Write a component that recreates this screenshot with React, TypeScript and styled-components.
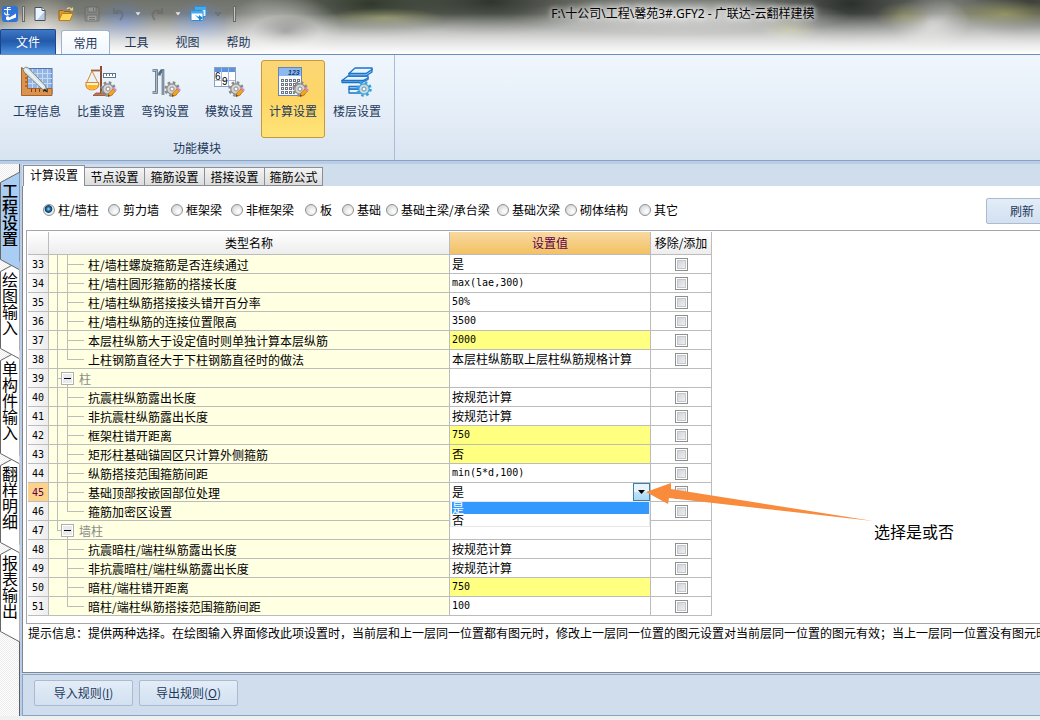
import React from "react";
import styled, { createGlobalStyle, css } from "styled-components";

const cjk = '"Noto Sans CJK SC", sans-serif';

const GlobalStyle = createGlobalStyle`
  *, *::before, *::after { box-sizing: border-box; }
  html, body { margin: 0; overflow-x: hidden; }
  body, button, input, select {
    font-family: ${cjk};
    font-size: 12px;
    line-height: 16px;
    color: #000;
  }
  button { padding: 0; border: 0; background: none; }
  svg { display: block; }
`;

const Window = styled.div`
  min-height: 100vh;
  display: flex;
  flex-direction: column;
  background: #f0f0f0;
`;

/* ---------- title bar ---------- */

const Header = styled.header`
  height: 55px;
  overflow: hidden;
  display: flex;
  flex-direction: column;
  justify-content: space-between;
  border-bottom: 1px solid #6b8fbb;
  background:
    linear-gradient(to bottom, rgba(255, 255, 255, 0) 25%, rgba(255, 255, 255, 0.65) 70%, #fff 100%),
    radial-gradient(ellipse 30px 24px at 124px 24px, rgba(96, 125, 185, 0.8), transparent),
    radial-gradient(ellipse 32px 26px at 200px 26px, rgba(96, 130, 195, 0.85), transparent),
    radial-gradient(ellipse 34px 16px at 286px 32px, rgba(70, 70, 70, 0.9), transparent),
    radial-gradient(ellipse 60px 34px at 282px 28px, rgba(215, 215, 212, 0.8), transparent),
    radial-gradient(ellipse 40px 34px at 42px 28px, rgba(226, 216, 200, 0.8), transparent),
    radial-gradient(ellipse 60px 10px at 385px 18px, rgba(170, 172, 110, 0.6), transparent),
    radial-gradient(ellipse 110px 34px at 370px 4px, rgba(42, 50, 36, 0.9), transparent),
    radial-gradient(ellipse 110px 34px at 490px 2px, rgba(40, 46, 38, 0.9), transparent),
    radial-gradient(ellipse 170px 18px at 680px 16px, rgba(226, 226, 226, 0.9), transparent),
    radial-gradient(ellipse 30px 12px at 790px 30px, rgba(180, 180, 120, 0.6), transparent),
    radial-gradient(ellipse 30px 14px at 905px 16px, rgba(160, 160, 104, 0.6), transparent),
    radial-gradient(ellipse 100px 44px at 850px 4px, rgba(36, 40, 38, 0.9), transparent),
    radial-gradient(ellipse 40px 26px at 930px 22px, rgba(224, 224, 224, 0.8), transparent),
    radial-gradient(ellipse 60px 14px at 1005px 14px, rgba(160, 160, 104, 0.8), transparent),
    radial-gradient(ellipse 70px 40px at 1030px 4px, rgba(44, 48, 40, 0.8), transparent),
    linear-gradient(to bottom, #70736c, #9a9b98);
`;

const TitleRow = styled.div`
  height: 27px;
  display: flex;
  align-items: center;
  padding-left: 2px;
`;

const QuickButton = styled.button<{ $narrow?: boolean; $faded?: boolean }>`
  width: ${(p) => (p.$narrow ? 14 : 26)}px;
  height: 20px;
  display: flex;
  align-items: center;
  justify-content: center;
  opacity: ${(p) => (p.$faded ? 0.5 : 1)};
`;

const Grip = styled.span`
  width: 3px;
  height: 16px;
  margin: 0 2px 0 4px;
  border: 1px solid #6a6a6a;
  background: #c8c8c8;
`;

const GripEnd = styled(Grip)`
  margin-left: 8px;
`;

const WindowTitle = styled.h1`
  flex: 1;
  margin: 0 -88px 0 0;
  text-align: center;
  white-space: nowrap;
  font: 400 12px/16px "Noto Sans", ${cjk};
  text-shadow: 0 0 5px #fff, 0 0 8px #fff;
`;

const MenuRow = styled.nav`
  display: flex;
  align-items: flex-end;
`;

const FileTab = styled.button`
  width: 56px;
  height: 25px;
  margin-right: 5px;
  color: #fff;
  border: 1px solid #1c4788;
  border-bottom: 0;
  border-radius: 2px 2px 0 0;
  background: linear-gradient(to bottom, #3f78c6, #2459a8 45%, #2b66b8 60%, #4f93e0);
`;

const MenuTab = styled.button<{ $active?: boolean }>`
  width: ${(p) => (p.$active ? 49 : 51)}px;
  height: 24px;
  color: #1e395b;
  border-radius: 3px 3px 0 0;
  ${(p) =>
    p.$active &&
    css`
      margin-right: 1px;
      border: 1px solid #9db4d0;
      border-bottom: 0;
      background: linear-gradient(to bottom, #fff, #f0f6fd);
    `}
`;

/* ---------- ribbon ---------- */

const Ribbon = styled.section`
  height: 106px;
  display: flex;
  border-bottom: 1px solid #8ba3c2;
  background: linear-gradient(to bottom, #eff6fd, #e4edf7 60%, #d8e4f1);
`;

const RibbonGroup = styled.div`
  display: flex;
  flex-direction: column;
  padding: 5px 5px 0;
  border-right: 1px solid #a9bdd6;
`;

const RibbonItems = styled.div`
  display: flex;
`;

const RibbonButton = styled.button<{ $active?: boolean }>`
  width: 64px;
  height: 78px;
  display: flex;
  flex-direction: column;
  align-items: center;
  gap: 5px;
  padding-top: 5px;
  color: #1e395b;
  border: 1px solid transparent;
  border-radius: 3px;
  ${(p) =>
    p.$active &&
    css`
      border-color: #c79a35;
      background: linear-gradient(to bottom, #fbd676, #fdd666 50%, #ffe478);
    `}
`;

const GroupLabel = styled.div`
  margin-top: 2px;
  text-align: center;
  color: #1e395b;
`;

/* ---------- body ---------- */

const Body = styled.div`
  flex: 1;
  display: flex;
  padding-top: 3px;
  margin-bottom: 4px;
  background: #b9cde6;
`;

const Rail = styled.div`
  width: 20px;
  flex: none;
  display: flex;
  flex-direction: column;
  padding-top: 8px;
  border-right: 1px solid #606060;
  background: repeating-conic-gradient(#fff 0 25%, #ececec 0 50%) 0 0 / 2px 2px;
`;

const RailButton = styled.button<{ $level: number; $active?: boolean }>`
  position: relative;
  z-index: ${(p) => p.$level};
  padding: 11px 1px 14px 2px;
  font-weight: ${(p) => (p.$active ? 500 : 400)};

  svg {
    position: absolute;
    z-index: -1;
    left: 0;
    top: 0;
    overflow: visible;
  }
`;

const RailText = styled.span`
  display: block;
  writing-mode: vertical-rl;
  font-size: 16px;
  line-height: 16px;
`;

const Main = styled.main`
  flex: 1;
  min-width: 0;
  display: flex;
  flex-direction: column;
  margin-left: 2px;
  background: #d0dded;
`;

const Tabs = styled.div`
  display: flex;
  align-items: flex-end;
  height: 22px;
  padding-left: 1px;
`;

const Tab = styled.button<{ $active?: boolean }>`
  width: ${(p) => (p.$active ? 62 : 60)}px;
  height: ${(p) => (p.$active ? 21 : 19)}px;
  padding-bottom: ${(p) => (p.$active ? 2 : 0)}px;
  border: 1px solid #8a8f96;
  border-bottom-width: ${(p) => (p.$active ? 0 : 1)}px;
  border-left-width: ${(p) => (p.$active ? 1 : 0)}px;
  background: ${(p) => (p.$active ? "#fff" : "linear-gradient(to bottom, #f4f4f4, #dcdcdc)")};
  &:last-child { width: 58px; }
`;

const Sheet = styled.div`
  flex: 1;
  display: flex;
  flex-direction: column;
  border-left: 1px solid #80858c;
  border-bottom: 1px solid #80858c;
  background: #fff;
`;

const FilterBar = styled.form`
  display: flex;
  align-items: center;
  height: 44px;
  padding: 6px 0 0 20px;
  margin-right: -18px;
`;

const Choices = styled.div`
  flex: 1;
  display: grid;
  grid-template-columns: 65px 63px 60px 74px 37px 44px 111px 68px 74px auto;
  padding-bottom: 2px;
`;

const Choice = styled.label`
  display: flex;
  align-items: center;
  gap: 3px;
  white-space: nowrap;
`;

const Radio = styled.input`
  appearance: none;
  width: 12px;
  height: 12px;
  flex: none;
  margin: 0;
  border: 1px solid #8e8f8f;
  border-radius: 50%;
  background: radial-gradient(circle at 65% 65%, #fff, #c8ccd0);
  &:checked {
    background: radial-gradient(circle at 45% 40%, #9be0ff 0, #1d6fa5 25%, #123a5e 42%, #e8edf2 52%);
  }
`;

const PlainButton = styled.button<{ $width: number }>`
  width: ${(p) => p.$width}px;
  height: 26px;
  color: #1e395b;
  border: 1px solid #abbad0;
  border-radius: 2px;
  background: linear-gradient(to bottom, #e3edf8, #d2e0f0);
`;

const GridFrame = styled.div`
  position: relative;
  padding: 1px 1px 7px;
  margin-left: 3px;
  border: 1px solid #a6a6aa;
  border-right: 0;
`;

const Grid = styled.table`
  width: 684px;
  table-layout: fixed;
  border-collapse: separate;
  border-spacing: 0;
`;

const HeadCell = styled.th<{ $hot?: boolean }>`
  height: 23px;
  padding: 0;
  font-weight: 400;
  white-space: nowrap;
  color: ${(p) => (p.$hot ? "#5a0050" : "#000")};
  border-right: 1px solid #bcbcbc;
  border-bottom: 1px solid #bcbcbc;
  background: ${(p) =>
    p.$hot ? "linear-gradient(to bottom, #f8d9a0, #f2c163)" : "linear-gradient(to bottom, #fff, #ededed)"};
`;

const Cell = styled.td<{ $fill?: string }>`
  height: 19px;
  padding: 0;
  white-space: nowrap;
  border-right: 1px solid #bcbcbc;
  border-bottom: 1px solid #bcbcbc;
  background: ${(p) => p.$fill ?? "#fff"};
`;

const NumberCell = styled.th<{ $hot?: boolean }>`
  padding: 1px 0 0;
  font: 400 10px/16px "DejaVu Sans Mono", monospace;
  color: ${(p) => (p.$hot ? "#5a0050" : "#000")};
  border-right: 1px solid #bcbcbc;
  border-bottom: 1px solid #bcbcbc;
  background: ${(p) => (p.$hot ? "#fdd38c" : "linear-gradient(to right, #fbfbfb, #ededed)")};
`;

const NameLine = styled.div<{ $group?: boolean }>`
  display: flex;
  align-items: center;
  gap: ${(p) => (p.$group ? 5 : 0)}px;
  height: 18px;
  color: ${(p) => (p.$group ? "#8a8a8a" : "#000")};
`;

const NameText = styled.span`
  padding-top: 2px;
`;

const Value = styled.span<{ $latin?: boolean }>`
  display: block;
  padding-left: 2px;
  line-height: 16px;
  ${(p) => p.$latin && css`font: 400 10px/16px "DejaVu Sans Mono", monospace;`}
`;

const CheckCell = styled(Cell)`
  text-align: center;
  line-height: 0;
`;

const Check = styled.input`
  appearance: none;
  width: 13px;
  height: 13px;
  margin: 0;
  vertical-align: middle;
  border: 1px solid #8e8f8f;
  background: linear-gradient(135deg, #c9ced4, #f6f6f6);
  box-shadow: inset 0 0 0 1px #fff, inset 0 0 0 2px #c4c8cc;
`;

const Combo = styled.div`
  position: relative;
  height: 18px;
`;

const ComboSelect = styled.select`
  appearance: none;
  width: 100%;
  height: 18px;
  padding: 0 0 0 2px;
  border: 0;
  background: #fff;
  outline: 0;
`;

const ComboArrow = styled.span`
  position: absolute;
  right: 0;
  top: 0;
  width: 17px;
  height: 18px;
  display: flex;
  align-items: center;
  justify-content: center;
  border: 1px solid #3c7fb1;
  background: linear-gradient(to bottom, #e8f5fc 50%, #bfe3f7 50%, #a9d8f2);
  pointer-events: none;
`;

const Options = styled.ul`
  position: absolute;
  z-index: 1;
  left: 0;
  right: 0;
  top: 18px;
  margin: 0;
  padding: 0 0 0 1px;
  list-style: none;
  border: 1px solid #e3e9f0;
  background: #fff;
`;

const Option = styled.li<{ $selected?: boolean }>`
  height: 12px;
  overflow: hidden;
  line-height: 12px;
  color: ${(p) => (p.$selected ? "#fff" : "#000")};
  background: ${(p) => (p.$selected ? "#3399ff" : "#fff")};
`;

const Callout = styled.div`
  position: absolute;
  z-index: 2;
  left: 619px;
  top: 252px;
  display: flex;
  align-items: flex-start;
  font-size: 16px;
  line-height: 20px;
  white-space: nowrap;
  pointer-events: none;
`;

const CalloutText = styled.span`
  padding-top: 38px;
`;

const Hint = styled.p`
  flex: 1;
  margin: 0;
  padding: 1px 0 0 5px;
  white-space: nowrap;
  overflow: hidden;
`;

const Footer = styled.footer`
  height: 42px;
  display: flex;
  gap: 6px;
  margin-top: 1px;
  padding: 5px 11px;
  border: 1px solid #86a3c9;
  border-right: 0;
  background: #d0dded;
`;

/* ---------- icons ---------- */

const LogoIcon = () => (
  <svg width="16" height="16" viewBox="0 0 16 16">
    <rect width="16" height="16" rx="3" fill="#2f73d8" />
    <path d="M5.500 1v8M2 3.500h7M2.500 6.500c0 2 2 3 5 2M5.500 1.500h3" stroke="#fff" fill="none" strokeWidth="1.200" />
    <path d="M4 11l2-1 1.500 1.500L14 7.500v4L6 14.500l-2-1z" fill="#fff" />
  </svg>
);
const NewIcon = () => (
  <svg width="16" height="16" viewBox="0 0 16 16">
    <path d="M3 1.500h7l3 3v10H3z" fill="#eef4fb" stroke="#3c536e" />
    <path d="M12 6v8H5z" fill="#b9cbe2" />
    <path d="M10 1.500v3h3" fill="#fff" stroke="#3c536e" />
  </svg>
);
const OpenIcon = () => (
  <svg width="16" height="16" viewBox="0 0 16 16">
    <path d="M1 13.500V4.500h4l1 1h6v3" fill="#d99a2b" stroke="#9a6516" />
    <path d="M1 14.500l3-7h11l-3 7z" fill="#ffd75e" stroke="#b97d1c" />
    <path d="M9 3c2-2 4-1 5 1M14.500 1.500V4H12" fill="none" stroke="#f3d37a" strokeWidth="1.200" />
  </svg>
);
const SaveIcon = () => (
  <svg width="16" height="16" viewBox="0 0 16 16">
    <path d="M1 1h13l1 1v13H1z" fill="#8b8b8b" stroke="#5a5a5a" />
    <path d="M4 1h8v5H4zM3 9h10v6H3z" fill="#b2b2b2" stroke="#666" />
    <path d="M9.500 2v3M5 11.500h6M5 13.500h6" stroke="#5f5f5f" />
  </svg>
);
const UndoIcon = ({ flip }: { flip?: boolean }) => (
  <svg width="16" height="16" viewBox="0 0 16 16">
    <path
      d={flip ? "M5 14C0 9 4 1 11 6M12 2v5H7" : "M10 14c5-5 1-12-5-8M4 2v5h5"}
      fill="none"
      stroke="#646464"
      strokeWidth="2"
    />
  </svg>
);
const Caret = ({ color = "#e8e8e8" }: { color?: string }) => (
  <svg width="6" height="4" viewBox="0 0 6 4">
    <path d="M0 0h6L3 4z" fill={color} stroke="#555" strokeWidth=".4" />
  </svg>
);
const WindowsIcon = () => (
  <svg width="17" height="16" viewBox="0 0 17 16">
    <rect x="5" y=".500" width="11" height="10" rx="1" fill="#dff1ff" stroke="#2b8fd6" />
    <path d="M5 1h11v3H5z" fill="#47a9ec" />
    <rect x="1" y="4.500" width="12" height="10" rx="1" fill="#fff" stroke="#2b8fd6" />
    <path d="M1 5h12v2.500H1z" fill="#47a9ec" />
    <path d="M5 9l4 2V9l4 3-4 3v-2z" fill="#178ae0" />
  </svg>
);

const Gear = ({ color = "#8c8c8c", pencil = true }: { color?: string; pencil?: boolean }) => (
  <g>
    <circle cx="24" cy="23" r="6.500" fill="none" stroke={color} strokeWidth="2.500" strokeDasharray="2.600 2.500" />
    <circle cx="24" cy="23" r="5.200" fill="#d4d4d4" stroke={color} strokeWidth="1.200" />
    <circle cx="24" cy="23" r="2" fill="#fff" stroke={color} />
    {pencil && (
      <g>
        <path d="M24 30.500l.8-3.500 4-4 2.500 2.500-4 4z" fill="#f7a31c" stroke="#b96c0c" strokeWidth=".7" />
        <path d="M28.800 23l1.700-1.500 2.500 2.500-1.700 1.500z" fill="#d58bd0" />
        <path d="M24 30.500l.5-2 1.500 1.500z" fill="#333" />
      </g>
    )}
  </g>
);

const ProjectIcon = () => (
  <svg width="34" height="32" viewBox="0 0 34 32">
    <rect x="6" y="2.500" width="26" height="25" fill="#94b5e2" stroke="#4f74b0" />
    <path d="M12.500 3v22M17.500 3v22M22.500 3v22M27.500 3v22M7 7.500h25M7 12.500h25M7 17.500h25" stroke="#c8dbf4" />
    <path d="M1.500 1.500L7.500 5v17.500h24.500v7H1.500z" fill="#dc9350" stroke="#a8622a" />
    <path d="M7 8H5M7 12H5M7 16H5M7 20H5M11.500 23v3M15.500 23v3M19.500 23v3M23.500 23v3M27.500 23v3" stroke="#7a4318" />
    <path d="M3 3.500l2.500-2.500 3 1 17 18 1.500 5.500-5-2.500L4 6z" fill="#dde7e6" stroke="#6d8185" strokeWidth=".9" />
    <path d="M5.500 3l18 18.500" stroke="#fff" />
    <path d="M28 26.500l-3-4-2 2z" fill="#222" />
  </svg>
);
const WeightIcon = () => (
  <svg width="34" height="32" viewBox="0 0 34 32">
    <path d="M17 0v28" stroke="#8c4a2f" strokeWidth="2" />
    <path d="M7 4.500h10" stroke="#a65f3f" strokeWidth="1.800" />
    <path d="M9 29.500h14l-3-2.500h-8z" fill="#c47a52" stroke="#8c4a2f" strokeWidth=".8" />
    <path d="M8 5L2.500 17M8 5l6 12" stroke="#d98a2c" fill="none" />
    <path d="M2 16.500h12.500c1 5-3 7.500-6.500 7.500S1 21.500 2 16.500z" fill="#fff4d8" stroke="#d98a2c" strokeWidth="1.200" />
    <path d="M3 19h10.500c-.5 3-3 4.200-5.500 4.200S3.500 22 3 19z" fill="#ffb31f" />
    <rect x="19.500" y="7.500" width="12" height="4" fill="#fff" stroke="#5a748e" />
    <path d="M22.500 8v2M25.500 8v2M28.500 8v2" stroke="#5a748e" />
    <Gear />
  </svg>
);
const HookIcon = () => (
  <svg width="34" height="32" viewBox="0 0 34 32">
    <path d="M4.500 4.500h4v22h-4M15 29V4.500h-1.500L11.500 7.500v2" stroke="#56697b" strokeWidth="2.600" fill="none" />
    <path d="M4.500 4.500h4v22h-4M15 29V4.500" stroke="#c3d1dd" strokeWidth=".8" fill="none" />
    <Gear />
  </svg>
);
const ModuleIcon = () => (
  <svg width="34" height="32" viewBox="0 0 34 32">
    <rect x="2.500" y="1.500" width="21" height="19" fill="#fff" stroke="#8aa0bd" />
    <path d="M3 2h20v4H3z" fill="#5c93dc" />
    <path d="M9.500 2v18M16.500 2v18M3 14.500h20" stroke="#a9bcd6" />
    <text x="3" y="14" fontSize="10" fontFamily="Liberation Sans">6</text>
    <text x="10" y="19" fontSize="10" fontFamily="Liberation Sans">9</text>
    <Gear />
  </svg>
);
const CalcIcon = () => (
  <svg width="34" height="32" viewBox="0 0 34 32">
    <rect x="2.500" y="1.500" width="23" height="28" fill="#f7f9fc" stroke="#6487b5" />
    <path d="M3 2h22v8H3z" fill="#8cbaf0" />
    <text x="12" y="9" fontSize="7" fontStyle="italic" fontWeight="700" fill="#173d73" fontFamily="Liberation Sans">123</text>
    <path d="M5 14.500h19M5 18.500h19M5 22.500h13M5 26.500h13" stroke="#6b7480" strokeWidth="3" strokeDasharray="3 1" />
    <path d="M6 14.500h18M6 18.500h18M6 22.500h12M6 26.500h12" stroke="#fff" strokeWidth="1" strokeDasharray="1 3" />
    <Gear />
  </svg>
);
const FloorIcon = () => (
  <svg width="34" height="32" viewBox="0 0 34 32">
    <g fill="#e7f3fd" stroke="#1c74c8" strokeWidth="1.300" strokeLinejoin="round">
      <path d="M9 23h13v4H9z" />
      <path d="M9 20.500h16v2.500H9z" fill="#b5d8f6" />
      <path d="M2 16.500h20l6-3v-2l-5 3H2z" fill="#b5d8f6" />
      <path d="M2 14.500l6-4.500h20v2l-5 2.500z" />
      <path d="M9 7.500h17l6-4.500v3l-6 4H9z" fill="#b5d8f6" />
      <path d="M9 7.500l6-5.500h17v1.500l-6 4z" />
    </g>
    <Gear color="#38a0dc" pencil={false} />
  </svg>
);

const TreeLines = ({ last, outer }: { last?: boolean; outer: boolean }) => (
  <svg width="39" height="18" viewBox="0 0 39 18" shapeRendering="crispEdges">
    {outer && <path d="M8.500 0v18" stroke="#bcbcbc" />}
    <path d={`M18.500 0v${last ? 9 : 18}M18 9.500h17`} stroke="#bcbcbc" />
  </svg>
);
const TreeNode = ({ last }: { last?: boolean }) => (
  <svg width="25" height="18" viewBox="0 0 25 18" shapeRendering="crispEdges">
    <path d={`M8.500 0v${last ? 9 : 18}M8 9.500h5M18.500 16v2`} stroke="#bcbcbc" />
    <rect x="12.500" y="3.500" width="12" height="12" fill="#e8eaee" stroke="#b0b0b0" />
    <rect x="13.500" y="4.500" width="10" height="10" fill="none" stroke="#fff" />
    <path d="M15 9.500h7" stroke="#000" />
  </svg>
);

/* ---------- data ---------- */

const tools = [
  { label: "工程信息", Icon: ProjectIcon },
  { label: "比重设置", Icon: WeightIcon },
  { label: "弯钩设置", Icon: HookIcon },
  { label: "模数设置", Icon: ModuleIcon },
  { label: "计算设置", Icon: CalcIcon, active: true },
  { label: "楼层设置", Icon: FloorIcon },
];

const sections = ["工程设置", "绘图输入", "单构件输入", "翻样明细", "报表输出"];
const tabs = ["计算设置", "节点设置", "箍筋设置", "搭接设置", "箍筋公式"];
const members = ["柱/墙柱", "剪力墙", "框架梁", "非框架梁", "板", "基础", "基础主梁/承台梁", "基础次梁", "砌体结构", "其它"];

type Row = { no: number; name: string; value?: string; changed?: boolean; group?: boolean; last?: boolean; combo?: boolean };

const rows: Row[] = [
  { no: 33, name: "柱/墙柱螺旋箍筋是否连续通过", value: "是" },
  { no: 34, name: "柱/墙柱圆形箍筋的搭接长度", value: "max(lae,300)" },
  { no: 35, name: "柱/墙柱纵筋搭接接头错开百分率", value: "50%" },
  { no: 36, name: "柱/墙柱纵筋的连接位置限高", value: "3500" },
  { no: 37, name: "本层柱纵筋大于设定值时则单独计算本层纵筋", value: "2000", changed: true },
  { no: 38, name: "上柱钢筋直径大于下柱钢筋直径时的做法", value: "本层柱纵筋取上层柱纵筋规格计算", last: true },
  { no: 39, name: "柱", group: true },
  { no: 40, name: "抗震柱纵筋露出长度", value: "按规范计算" },
  { no: 41, name: "非抗震柱纵筋露出长度", value: "按规范计算" },
  { no: 42, name: "框架柱错开距离", value: "750", changed: true },
  { no: 43, name: "矩形柱基础锚固区只计算外侧箍筋", value: "否", changed: true },
  { no: 44, name: "纵筋搭接范围箍筋间距", value: "min(5*d,100)" },
  { no: 45, name: "基础顶部按嵌固部位处理", combo: true },
  { no: 46, name: "箍筋加密区设置", last: true },
  { no: 47, name: "墙柱", group: true, last: true },
  { no: 48, name: "抗震暗柱/端柱纵筋露出长度", value: "按规范计算" },
  { no: 49, name: "非抗震暗柱/端柱纵筋露出长度", value: "按规范计算" },
  { no: 50, name: "暗柱/端柱错开距离", value: "750", changed: true },
  { no: 51, name: "暗柱/端柱纵筋搭接范围箍筋间距", value: "100", last: true },
];

const RailTab = ({ text, index }: { text: string; index: number }) => {
  const h = text.length * 16 + 25;
  const active = index === 0;
  return (
    <RailButton $level={sections.length - index} $active={active}>
      <svg width="19" height={h} viewBox={`0 0 19 ${h}`}>
        <path d={`M.5 10.500L19.500 .500V${h + 8.5}L.5 ${h - 1.5}z`} fill={active ? "#a9cdf3" : "#fff"} />
        <path d={`M19 .500L.5 10.500V${h - 1.5}L19 ${h + 8.5}`} fill="none" stroke="#666" />
      </svg>
      <RailText>{text}</RailText>
    </RailButton>
  );
};

const ValueCombo = () => (
  <Combo>
    <ComboSelect aria-label="基础顶部按嵌固部位处理" defaultValue="是">
      <option>是</option>
      <option>否</option>
    </ComboSelect>
    <ComboArrow>
      <svg width="7" height="4" viewBox="0 0 7 4">
        <path d="M0 0h7L3.500 4z" />
      </svg>
    </ComboArrow>
    <Options role="listbox">
      <Option role="option" aria-selected $selected>是</Option>
      <Option role="option" aria-selected={false}>否</Option>
    </Options>
  </Combo>
);

const SettingRow = ({ row }: { row: Row }) => (
  <tr>
    <NumberCell scope="row" $hot={row.combo}>{row.no}</NumberCell>
    <Cell $fill="#ffffe1">
      <NameLine $group={row.group}>
        {row.group ? <TreeNode last={row.last} /> : <TreeLines last={row.last} outer={row.no < 47} />}
        <NameText>{row.name}</NameText>
      </NameLine>
    </Cell>
    <Cell $fill={row.changed ? "#ffff80" : "#fff"}>
      {row.combo ? <ValueCombo /> : row.value && <Value $latin={/^[\x00-\x7f]+$/.test(row.value)}>{row.value}</Value>}
    </Cell>
    <CheckCell>{!row.group && <Check type="checkbox" aria-label={row.name} />}</CheckCell>
  </tr>
);

export default function App() {
  return (
    <Window>
      <GlobalStyle />
      <Header>
        <TitleRow>
          <LogoIcon />
          <Grip />
          <QuickButton aria-label="新建"><NewIcon /></QuickButton>
          <QuickButton aria-label="打开"><OpenIcon /></QuickButton>
          <QuickButton aria-label="保存" $faded><SaveIcon /></QuickButton>
          <QuickButton aria-label="撤销" $faded><UndoIcon /></QuickButton>
          <QuickButton aria-label="撤销列表" $narrow><Caret /></QuickButton>
          <QuickButton aria-label="恢复" $faded><UndoIcon flip /></QuickButton>
          <QuickButton aria-label="恢复列表" $narrow><Caret /></QuickButton>
          <QuickButton aria-label="切换窗口"><WindowsIcon /></QuickButton>
          <QuickButton aria-label="窗口列表" $narrow><Caret color="#777" /></QuickButton>
          <GripEnd />
          <WindowTitle>F:\十公司\工程\馨苑3#.GFY2 - 广联达-云翻样建模</WindowTitle>
        </TitleRow>
        <MenuRow>
          <FileTab>文件</FileTab>
          <MenuTab $active>常用</MenuTab>
          <MenuTab>工具</MenuTab>
          <MenuTab>视图</MenuTab>
          <MenuTab>帮助</MenuTab>
        </MenuRow>
      </Header>
      <Ribbon>
        <RibbonGroup>
          <RibbonItems>
            {tools.map(({ label, Icon, active }) => (
              <RibbonButton key={label} $active={active}>
                <Icon />
                {label}
              </RibbonButton>
            ))}
          </RibbonItems>
          <GroupLabel>功能模块</GroupLabel>
        </RibbonGroup>
      </Ribbon>
      <Body>
        <Rail>
          {sections.map((text, i) => (
            <RailTab key={text} text={text} index={i} />
          ))}
        </Rail>
        <Main>
          <Tabs>
            {tabs.map((text, i) => (
              <Tab key={text} $active={i === 0}>{text}</Tab>
            ))}
          </Tabs>
          <Sheet>
            <FilterBar>
              <Choices>
                {members.map((text, i) => (
                  <Choice key={text}>
                    <Radio type="radio" name="member" defaultChecked={i === 0} />
                    {text}
                  </Choice>
                ))}
              </Choices>
              <PlainButton type="button" $width={72}>刷新</PlainButton>
            </FilterBar>
            <GridFrame>
              <Grid>
                <colgroup>
                  <col width="21" />
                  <col width="401" />
                  <col width="201" />
                  <col width="61" />
                </colgroup>
                <thead>
                  <tr>
                    <HeadCell aria-label="序号" />
                    <HeadCell>类型名称</HeadCell>
                    <HeadCell $hot>设置值</HeadCell>
                    <HeadCell>移除/添加</HeadCell>
                  </tr>
                </thead>
                <tbody>
                  {rows.map((row) => (
                    <SettingRow key={row.no} row={row} />
                  ))}
                </tbody>
              </Grid>
              <Callout>
                <svg width="228" height="40" viewBox="0 0 228 40">
                  <path d="M0 9L25 0v6l202 32-204-23-1 6z" fill="#f98b3c" />
                </svg>
                <CalloutText>选择是或否</CalloutText>
              </Callout>
            </GridFrame>
            <Hint>
              提示信息：提供两种选择。在绘图输入界面修改此项设置时，当前层和上一层同一位置都有图元时，修改上一层同一位置的图元设置对当前层同一位置的图元有效；当上一层同一位置没有图元时
            </Hint>
          </Sheet>
          <Footer>
            <PlainButton $width={99}>导入规则(<u>I</u>)</PlainButton>
            <PlainButton $width={99}>导出规则(<u>O</u>)</PlainButton>
          </Footer>
        </Main>
      </Body>
    </Window>
  );
}
